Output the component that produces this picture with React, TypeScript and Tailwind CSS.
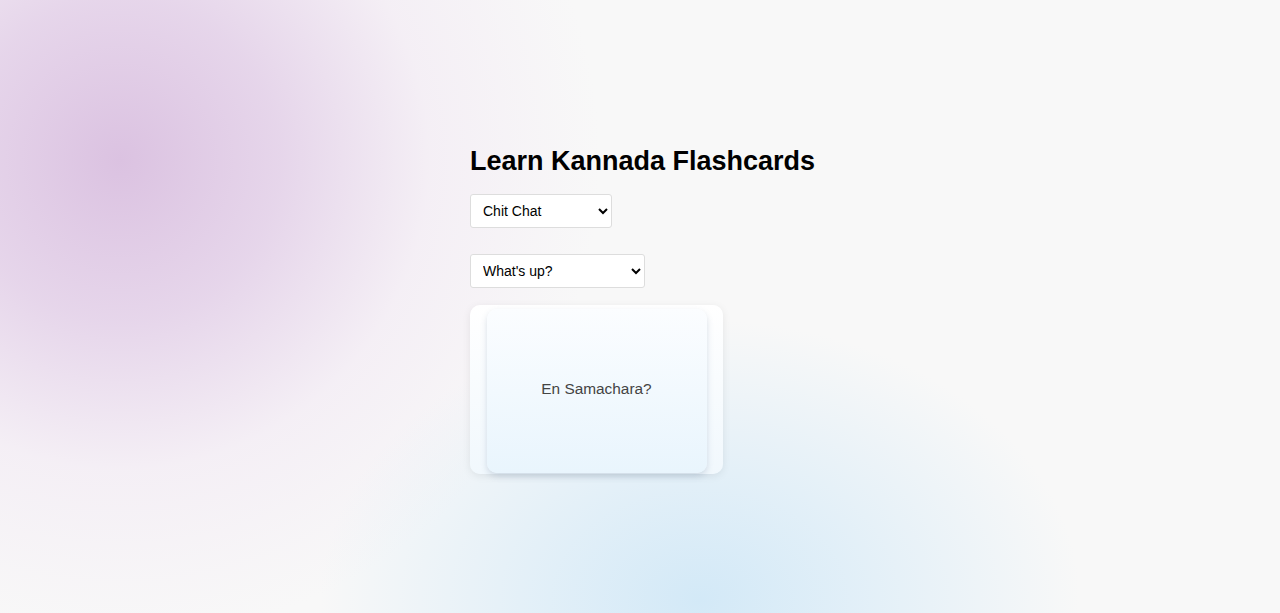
import { useState } from "react";

const phrases = ["What's up?", "How are you?", "What is your name?"];

export default function App() {
  const [topic, setTopic] = useState("Chit Chat");
  const [phrase, setPhrase] = useState(phrases[0]);

  return (
    <div className="relative min-h-[613px] w-full overflow-hidden bg-[#f8f8f8] font-['Liberation_Sans',Arial,sans-serif]">
      <div className="pointer-events-none absolute inset-0 bg-[radial-gradient(circle_at_120px_160px,#dbc2e1_0px,rgba(224,202,230,0.75)_160px,rgba(240,228,242,0.45)_310px,rgba(248,248,248,0)_480px)]" />
      <div className="pointer-events-none absolute inset-0 bg-[radial-gradient(ellipse_380px_280px_at_700px_600px,#d3e9f7_0%,rgba(220,237,248,0.75)_45%,rgba(248,248,248,0)_100%)]" />

      <div className="relative mx-auto w-[340px] pt-[143px]">
        <h1 className="whitespace-nowrap text-[27px] font-bold leading-[36px] text-black">
          Learn Kannada Flashcards
        </h1>

        <div className="mt-[15px]">
          <select
            value={topic}
            onChange={(e) => setTopic(e.target.value)}
            className="h-[34px] w-[142px] rounded-[3px] border border-[#dddddd] bg-white px-2 text-[14px] text-black"
          >
            <option>Chit Chat</option>
            <option>Greetings</option>
          </select>
        </div>

        <div className="mt-[26px]">
          <select
            value={phrase}
            onChange={(e) => setPhrase(e.target.value)}
            className="h-[34px] w-[175px] rounded-[3px] border border-[#dddddd] bg-white px-2 text-[14px] text-black"
          >
            {phrases.map((p) => (
              <option key={p}>{p}</option>
            ))}
          </select>
        </div>

        <div className="mt-[17px] flex h-[169px] w-[253px] justify-center rounded-[10px] bg-gradient-to-b from-white to-[#f1f8fd] shadow-[0_2px_8px_rgba(0,0,0,0.08)]">
          <div className="mt-[4px] flex h-[164px] w-[220px] items-center justify-center rounded-[10px] bg-gradient-to-b from-[#fbfdff] to-[#e9f5fd] pb-[4px] shadow-[0_3px_6px_rgba(80,110,140,0.22)]">
            <span className="text-[15.4px] text-[#444]">En Samachara?</span>
          </div>
        </div>
      </div>
    </div>
  );
}
